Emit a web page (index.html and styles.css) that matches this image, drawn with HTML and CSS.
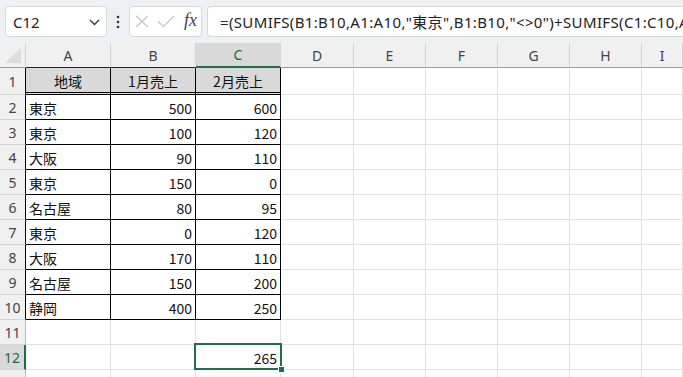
FILE: index.html
```html
<!DOCTYPE html>
<html>
<head>
  <meta charset="UTF-8">
  <title>SUMIFS sheet</title>
  <link rel="stylesheet" href="styles.css">
</head>
<body>
  <div class="topbar">
    <div class="namebox">
      <span>C12</span>
      <svg class="chevron" width="11" height="7" viewBox="0 0 11 7"><path d="M1 1 L5.5 5.5 L10 1" fill="none" stroke="#333" stroke-width="1.3"/></svg>
    </div>
    <svg class="dots" width="4" height="14" viewBox="0 0 4 14"><circle cx="2" cy="2" r="1.3" fill="#333"/><circle cx="2" cy="7" r="1.3" fill="#333"/><circle cx="2" cy="12" r="1.3" fill="#333"/></svg>
    <div class="fxbox">
      <svg width="14" height="13" viewBox="0 0 14 13"><path d="M1 1 L13 12 M13 1 L1 12" stroke="#c4c4c4" stroke-width="1.2" fill="none"/></svg>
      <svg width="18" height="13" viewBox="0 0 18 13"><path d="M1 6.5 L6.5 11.5 L17 1" stroke="#c4c4c4" stroke-width="1.2" fill="none"/></svg>
      <span class="fx">fx</span>
    </div>
    <div class="formula">=(SUMIFS(B1:B10,A1:A10,"東京",B1:B10,"&lt;&gt;0")+SUMIFS(C1:C10,A1:A10,"東京",C1:C10,"&lt;&gt;0"))</div>
  </div>

  <div class="sheet">
    <!-- column headers -->
    <div class="corner"><span class="tri"></span></div>
    <div class="colhead top-black">A</div>
    <div class="colhead top-black">B</div>
    <div class="colhead active">C</div>
    <div class="colhead">D</div>
    <div class="colhead">E</div>
    <div class="colhead">F</div>
    <div class="colhead">G</div>
    <div class="colhead">H</div>
    <div class="colhead">I</div>

    <!-- row 1 -->
    <div class="rowhead edge">1</div>
    <div class="cell t head">地域</div>
    <div class="cell t head">1月売上</div>
    <div class="cell t head">2月売上</div>
    <div class="cell"></div><div class="cell"></div><div class="cell"></div><div class="cell"></div><div class="cell"></div><div class="cell"></div>

    <div class="rowhead edge">2</div>
    <div class="cell t">東京</div><div class="cell t num">500</div><div class="cell t num">600</div>
    <div class="cell"></div><div class="cell"></div><div class="cell"></div><div class="cell"></div><div class="cell"></div><div class="cell"></div>

    <div class="rowhead edge">3</div>
    <div class="cell t">東京</div><div class="cell t num">100</div><div class="cell t num">120</div>
    <div class="cell"></div><div class="cell"></div><div class="cell"></div><div class="cell"></div><div class="cell"></div><div class="cell"></div>

    <div class="rowhead edge">4</div>
    <div class="cell t">大阪</div><div class="cell t num">90</div><div class="cell t num">110</div>
    <div class="cell"></div><div class="cell"></div><div class="cell"></div><div class="cell"></div><div class="cell"></div><div class="cell"></div>

    <div class="rowhead edge">5</div>
    <div class="cell t">東京</div><div class="cell t num">150</div><div class="cell t num">0</div>
    <div class="cell"></div><div class="cell"></div><div class="cell"></div><div class="cell"></div><div class="cell"></div><div class="cell"></div>

    <div class="rowhead edge">6</div>
    <div class="cell t">名古屋</div><div class="cell t num">80</div><div class="cell t num">95</div>
    <div class="cell"></div><div class="cell"></div><div class="cell"></div><div class="cell"></div><div class="cell"></div><div class="cell"></div>

    <div class="rowhead edge">7</div>
    <div class="cell t">東京</div><div class="cell t num">0</div><div class="cell t num">120</div>
    <div class="cell"></div><div class="cell"></div><div class="cell"></div><div class="cell"></div><div class="cell"></div><div class="cell"></div>

    <div class="rowhead edge">8</div>
    <div class="cell t">大阪</div><div class="cell t num">170</div><div class="cell t num">110</div>
    <div class="cell"></div><div class="cell"></div><div class="cell"></div><div class="cell"></div><div class="cell"></div><div class="cell"></div>

    <div class="rowhead edge">9</div>
    <div class="cell t">名古屋</div><div class="cell t num">150</div><div class="cell t num">200</div>
    <div class="cell"></div><div class="cell"></div><div class="cell"></div><div class="cell"></div><div class="cell"></div><div class="cell"></div>

    <div class="rowhead edge">10</div>
    <div class="cell t">静岡</div><div class="cell t num">400</div><div class="cell t num">250</div>
    <div class="cell"></div><div class="cell"></div><div class="cell"></div><div class="cell"></div><div class="cell"></div><div class="cell"></div>

    <div class="rowhead">11</div>
    <div class="cell"></div><div class="cell"></div><div class="cell"></div>
    <div class="cell"></div><div class="cell"></div><div class="cell"></div><div class="cell"></div><div class="cell"></div><div class="cell"></div>

    <div class="rowhead active">12</div>
    <div class="cell"></div><div class="cell"></div>
    <div class="cell num selected">265<span class="selbox"><span class="handle"></span></span></div>
    <div class="cell"></div><div class="cell"></div><div class="cell"></div><div class="cell"></div><div class="cell"></div><div class="cell"></div>

    <div class="rowhead">13</div>
    <div class="cell"></div><div class="cell"></div><div class="cell"></div>
    <div class="cell"></div><div class="cell"></div><div class="cell"></div><div class="cell"></div><div class="cell"></div><div class="cell"></div>
  </div>
</body>
</html>
```

FILE: styles.css
```css
* {
  box-sizing: border-box;
}
body {
  margin: 0;
  width: 683px;
  height: 377px;
  overflow: hidden;
  background: #fff;
  font-family: "Noto Sans", "Noto Sans CJK JP", sans-serif;
}
.topbar {
  height: 43px;
  background: #eef0f3;
  display: flex;
  align-items: center;
  padding: 0 0 0 5px;
  gap: 0;
}
.namebox {
  width: 102px;
  height: 31px;
  background: #fff;
  border: 1px solid #d6d8db;
  border-radius: 4px;
  display: flex;
  align-items: center;
  justify-content: space-between;
  padding: 0 6px 0 7px;
  font-size: 15px;
  color: #222;
}
.chevron {
  margin-top: 2px;
}
.dots {
  margin: 0 9px 0 9px;
}
.fxbox {
  width: 73px;
  height: 31px;
  background: #fff;
  border: 1px solid #d6d8db;
  border-radius: 4px;
  display: flex;
  align-items: center;
  padding: 0 4px 0 5px;
  gap: 8px;
}
.fx {
  font-family: "Liberation Serif", serif;
  font-style: italic;
  font-size: 18px;
  color: #444;
  margin-left: 1px;
  margin-top: -2px;
}
.formula {
  flex: 1;
  margin-left: 5px;
  height: 31px;
  background: #fff;
  border: 1px solid #d6d8db;
  border-right: none;
  border-radius: 4px 0 0 4px;
  padding: 0 0 0 12px;
  display: flex;
  align-items: center;
  white-space: nowrap;
  overflow: hidden;
  font-size: 15px;
  letter-spacing: 0.35px;
  color: #222;
}

.sheet {
  display: grid;
  grid-template-columns: 26px 85px 85px 85px 73px 72px 72px 72px 72px 1fr;
  grid-template-rows: 25px 27px repeat(12, 25px);
}
.corner,
.colhead {
  background: #f0f0f0;
  border-right: 1px solid #d4d4d4;
  border-bottom: 1px solid #9c9c9c;
}
.corner {
  position: relative;
}
.tri {
  position: absolute;
  left: 5px;
  top: 5px;
  width: 0;
  height: 0;
  border-left: 16px solid transparent;
  border-bottom: 15px solid #dcdcdc;
}
.colhead {
  display: flex;
  align-items: center;
  justify-content: center;
  font-size: 14px;
  color: #444;
}
.colhead.top-black {
  border-bottom-color: #222;
}
.colhead.active {
  background: #d9d9d9;
  color: #1e6b45;
  border-bottom: 2px solid #1e7145;
}
.rowhead {
  background: #f0f0f0;
  border-right: 1px solid #bdbdbd;
  border-bottom: 1px solid #d4d4d4;
  display: flex;
  align-items: center;
  justify-content: center;
  font-size: 14px;
  color: #444;
}
.rowhead.edge {
  border-right-color: #000;
}
.rowhead.active {
  background: #d9d9d9;
  color: #1e6b45;
  border-right: 2px solid #1e7145;
}
.cell {
  border-right: 1px solid #e1e1e1;
  border-bottom: 1px solid #e1e1e1;
  display: flex;
  align-items: center;
  padding: 1px 3px 0 3px;
  font-family: "Noto Sans CJK JP", sans-serif;
  font-size: 14px;
  color: #111;
  white-space: nowrap;
}
.cell.t {
  border-right-color: #000;
  border-bottom-color: #000;
}
.cell.head {
  background: #d9d9d9;
  justify-content: center;
  border-bottom: 3px double #000;
}
.cell.num {
  justify-content: flex-end;
}
.cell.selected {
  position: relative;
}
.selbox {
  position: absolute;
  left: -2px;
  top: -2px;
  right: -2px;
  bottom: -1px;
  border: 2px solid #1e7145;
}
.handle {
  position: absolute;
  right: -5px;
  bottom: -5px;
  width: 7px;
  height: 7px;
  background: #1e7145;
  border: 1px solid #fff;
}
```
